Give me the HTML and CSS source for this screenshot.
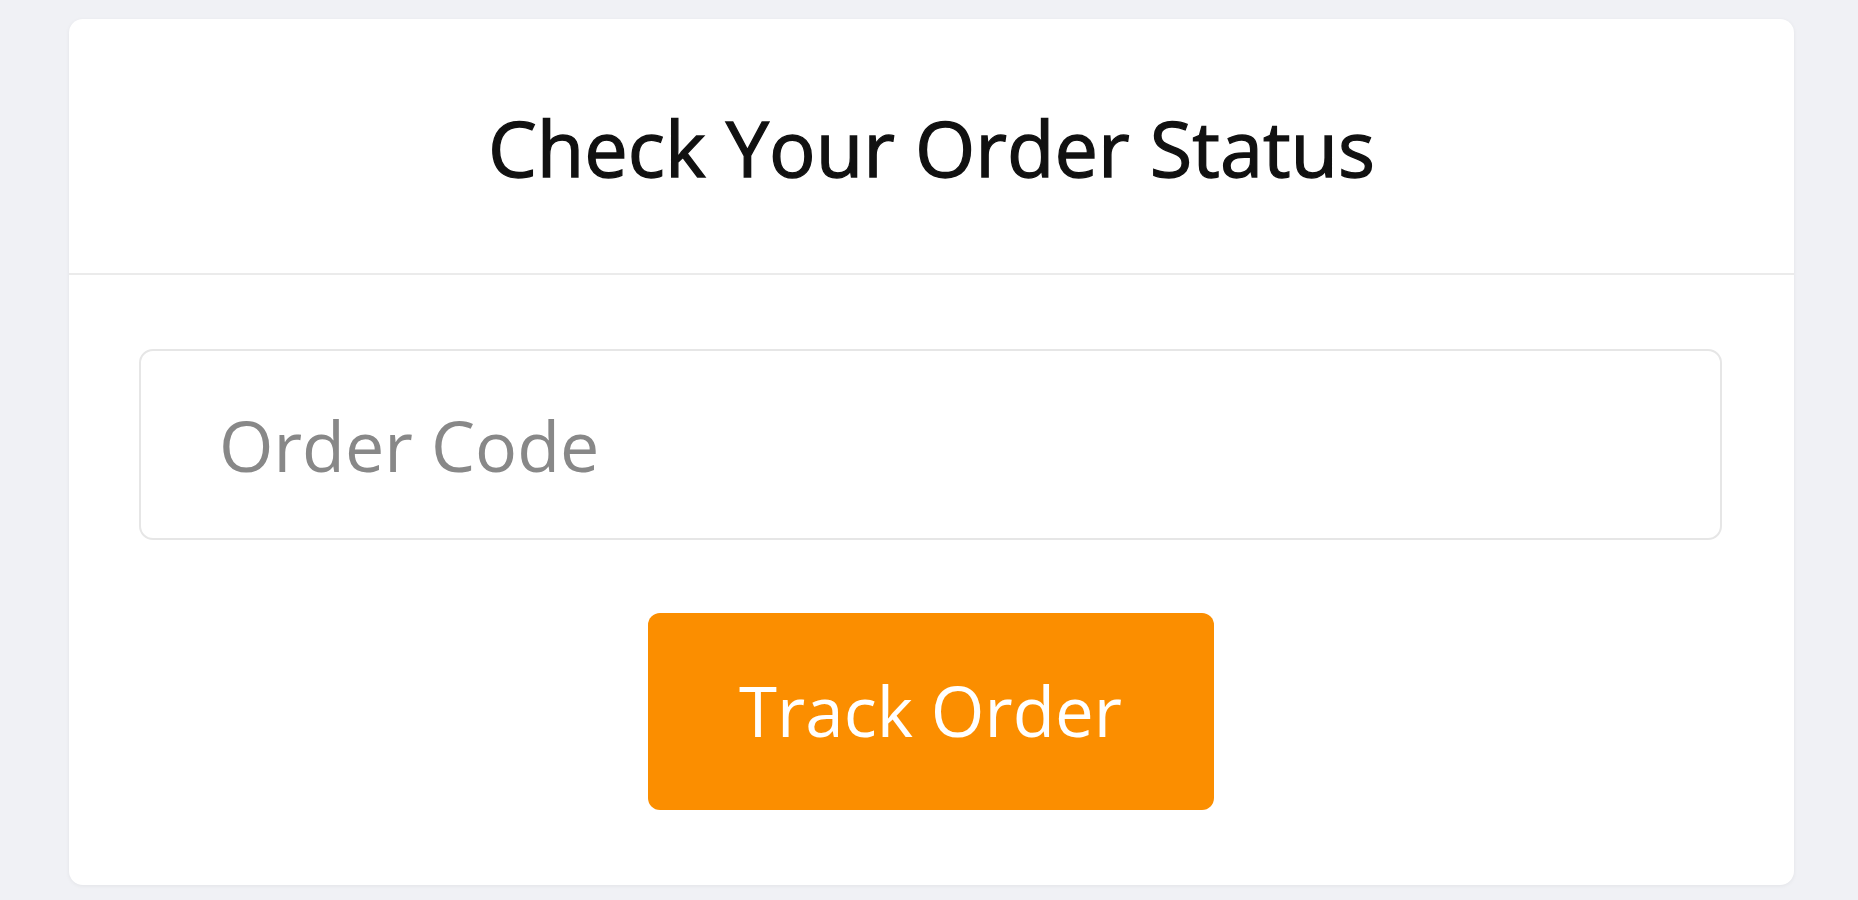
FILE: index.html
```html
<!DOCTYPE html>
<html lang="en">
<head>
<meta charset="utf-8">
<title>Check Your Order Status</title>
<link rel="stylesheet" href="styles.css">
</head>
<body>
<main class="page">
  <section class="card">
    <header class="card-header">
      <h1 class="card-title">Check Your Order Status</h1>
    </header>
    <form class="card-body">
      <input class="order-input" type="text" placeholder="Order Code">
      <button class="track-btn" type="button">Track Order</button>
    </form>
  </section>
</main>
</body>
</html>
```
FILE: styles.css
```css
* { box-sizing: border-box; }
html, body { margin: 0; padding: 0; }
body {
  background: #f0f1f5;
  font-family: "Open Sans", "Noto Sans", sans-serif;
  width: 1858px;
  height: 900px;
  overflow: hidden;
}
.page {
  padding: 19px 64px 0 69px;
}
.card {
  background: #ffffff;
  border-radius: 14px;
  box-shadow: 0 1px 4px rgba(0, 0, 0, 0.06);
  height: 866px;
  display: flex;
  flex-direction: column;
}
.card-header {
  height: 256px;
  border-bottom: 2px solid #ebebeb;
  display: flex;
  align-items: center;
  justify-content: center;
}
.card-title {
  margin: 0;
  font-size: 77.5px;
  font-weight: 400;
  -webkit-text-stroke: 1.3px #111111;
  color: #111111;
  line-height: 1;
  padding-top: 4px;
}
.card-body {
  margin: 0;
  padding: 74px 72px 0 70px;
  display: flex;
  flex-direction: column;
  align-items: center;
}
.order-input {
  width: 100%;
  height: 191px;
  border: 2px solid #e6e6e6;
  border-radius: 14px;
  padding: 0 0 0 78px;
  font-family: "Open Sans", "Noto Sans", sans-serif;
  font-size: 70px;
  color: #333;
  outline: none;
  background: #fff;
}
.order-input::placeholder {
  color: #888888;
}
.track-btn {
  margin-top: 73px;
  width: 566px;
  height: 197px;
  border: none;
  border-radius: 12px;
  background: #fb8e00;
  color: #ffffff;
  font-family: "Open Sans", "Noto Sans", sans-serif;
  font-size: 69px;
  font-weight: 400;
  padding: 0 0 4px 0;
  cursor: pointer;
}
```
